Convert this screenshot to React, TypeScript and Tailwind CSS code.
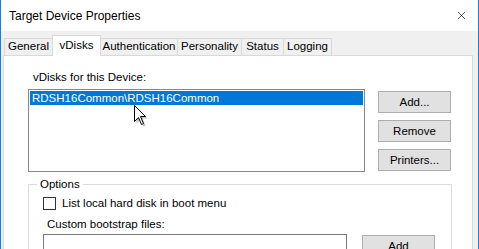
import { X } from 'lucide-react';

const tabs = [
  { label: 'General', w: 'w-[49px]' },
  { label: 'vDisks', w: 'w-[49px]', active: true },
  { label: 'Authentication', w: 'w-[78px]' },
  { label: 'Personality', w: 'w-[65px]' },
  { label: 'Status', w: 'w-[43px]' },
  { label: 'Logging', w: 'w-[49px]' },
];

function Button({ children, className = '' }: { children: React.ReactNode; className?: string }) {
  return (
    <button
      className={`h-[22px] w-[73px] shrink-0 border border-[#adadad] bg-[#e1e1e1] text-black leading-[20px] ${className}`}
    >
      {children}
    </button>
  );
}

function Cursor() {
  return (
    <svg className="absolute left-[105px] top-[15px]" width="16" height="24" viewBox="0 0 16 24">
      <path d="M2.5 2.5 L2.5 18.5 L6.5 14.5 L9.5 21.5 L11.5 20.5 L8.5 13.5 L13.5 13.5 Z" fill="#000" opacity="0.25" />
      <path d="M0.5 0.5 L0.5 16.5 L4.5 12.5 L7.5 19.5 L9.5 18.5 L6.5 11.5 L11.5 11.5 Z" fill="#fff" stroke="#000" strokeWidth="1" strokeLinejoin="miter" />
    </svg>
  );
}

export default function App() {
  return (
    <div className="w-[479px] h-[249px] overflow-hidden flex flex-col border-x border-[#1a7fd4] bg-white text-[11.5px] text-black font-['Liberation_Sans',Arial,sans-serif]">
      {/* title bar */}
      <div className="h-[31px] shrink-0 flex items-center justify-between pl-[8px] pr-[10px] bg-white">
        <span className="text-[12px]">Target Device Properties</span>
        <X size={13} strokeWidth={1.2} className="text-black" />
      </div>

      <div className="flex-1 min-h-0 flex flex-col bg-[#f0f0f0] pt-[4px] pl-[2px] pr-[5px]">
        {/* tabs */}
        <div className="flex shrink-0 items-end h-[20px] pl-[1px]">
          {tabs.map((t, i) =>
            t.active ? (
              <div
                key={t.label}
                className={`${t.w} -ml-[1px] -mb-[1px] h-[21px] relative z-10 bg-white border-x border-t border-[#d9d9d9] flex justify-center pt-[2px] leading-[15px]`}
              >
                {t.label}
              </div>
            ) : (
              <div
                key={t.label}
                className={`${t.w} ${i === 0 ? '' : '-ml-[1px]'} h-[17px] bg-[#f0f0f0] border-x border-t border-[#d9d9d9] flex justify-center leading-[15px]`}
              >
                {t.label}
              </div>
            )
          )}
        </div>

        {/* panel */}
        <div className="flex-1 shrink-0 bg-white border border-[#d9d9d9] pl-[24px] pt-[14px]">
          <div className="pl-[5px] h-[15px] leading-[15px] mb-[4px]">vDisks for this Device:</div>
          <div className="flex gap-[13px]">
            <div className="relative w-[337px] h-[83px] shrink-0 border border-[#828790] p-[1px]">
              <div className="h-[14px] bg-[#0078d7] text-white pl-[2px] leading-[14px]">
                RDSH16Common\RDSH16Common
              </div>
              <Cursor />
            </div>
            <div className="flex flex-col gap-[7px] pt-[2px]">
              <Button>Add...</Button>
              <Button>Remove</Button>
              <Button>Printers...</Button>
            </div>
          </div>

          <fieldset className="mt-[5px] w-[424px] border border-[#dcdcdc] min-w-0">
            <legend className="ml-[8px] px-[3px] h-[15px] leading-[15px]">Options</legend>
            <div className="mt-[4px] pl-[14px] flex items-center gap-[6px] h-[15px]">
              <span className="w-[13px] h-[13px] border border-[#333] bg-white" />
              <span className="leading-[15px]">List local hard disk in boot menu</span>
            </div>
            <div className="mt-[6px] pl-[18px] h-[15px] leading-[15px]">Custom bootstrap files:</div>
            <div className="mt-[2px] pl-[14px] flex gap-[15px]">
              <div className="w-[304px] h-[40px] border border-[#7a7a7a] bg-white" />
              <div className="pt-[1px]">
                <Button>Add</Button>
              </div>
            </div>
          </fieldset>
        </div>
      </div>
    </div>
  );
}
